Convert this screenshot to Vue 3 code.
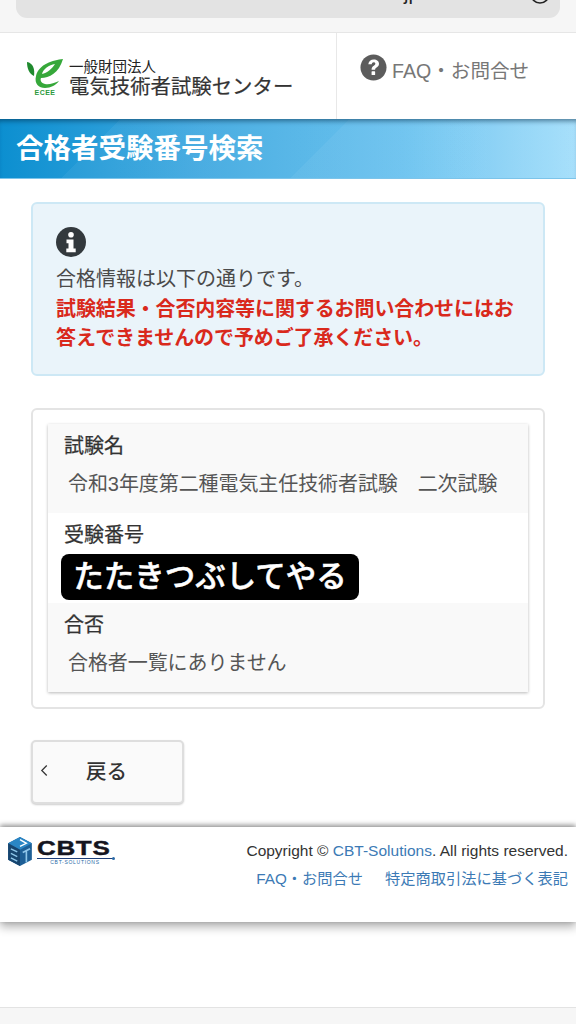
<script setup>
const rows = [
  { label: '試験名', value: '令和3年度第二種電気主任技術者試験\u3000二次試験', tone: 'grey' },
  { label: '受験番号', mask: 'たたきつぶしてやる', tone: 'white' },
  { label: '合否', value: '合格者一覧にありません', tone: 'grey' },
]
</script>

<template>
  <div class="page">
    <div class="chrome">
      <div class="urlbar">
        <span class="urltext">jp</span>
        <svg class="reload" viewBox="0 0 22 22" width="22" height="22" aria-hidden="true">
          <circle cx="11" cy="11" r="9" fill="none" stroke="#222" stroke-width="1.600"/>
        </svg>
      </div>
    </div>

    <header class="head">
      <div class="brand">
        <svg class="ecee" viewBox="0 0 40 44" width="40" height="44" aria-hidden="true">
          <path d="M2 6c6 1 8 7 7 14C4 18 2 12 2 6z" fill="#1f8a2e"/>
          <path fill-rule="evenodd" d="M38 3C28 4 14 8 11 20c-2 8 3 12 9 12s11-3 14-7c-5 2-10 4-14 3-4-1-5-4-4-6 8 0 18-5 22-19zM17 18c1-5 7-9 13-10-3 5-8 9-13 10z" fill="#36a83a"/>
          <text x="20" y="39" class="ecee-text">ECEE</text>
        </svg>
        <div class="org">
          <div class="org-sub">一般財団法人</div>
          <div class="org-main">電気技術者試験センター</div>
        </div>
      </div>
      <div class="faq">
        <svg class="q" viewBox="0 0 28 28" width="27" height="27" aria-hidden="true">
          <circle cx="14" cy="14" r="13.5" fill="#5c5c5c"/>
          <path d="M8.6 10.6C9 7.4 11.2 5.6 14.3 5.6c3.2 0 5.4 1.9 5.4 4.5 0 2-1 3-2.500 4-1.100.7-1.500 1.200-1.500 2.200h-3.700c0-2 .6-3.100 2.300-4.200 1-.7 1.600-1.200 1.600-2 0-.9-.7-1.500-1.700-1.500-1.100 0-1.800.7-2 2z" fill="#fff"/>
          <rect x="12" y="18" width="3.700" height="3.900" rx=".6" fill="#fff"/>
        </svg>
        <span>FAQ・お問合せ</span>
      </div>
    </header>

    <div class="band"><h1>合格者受験番号検索</h1></div>

    <main class="content">
      <section class="alert">
        <svg class="info" viewBox="0 0 30 30" width="30" height="30" aria-hidden="true">
          <circle cx="15" cy="15" r="15" fill="#33393d"/>
          <circle cx="15" cy="7.800" r="2.800" fill="#fff"/>
          <path d="M10.500 12.500h7v9h2.200v3.700h-9.400v-3.700h2.200v-5.300h-2z" fill="#fff"/>
        </svg>
        <p class="plain">合格情報は以下の通りです。</p>
        <p class="warn">試験結果・合否内容等に関するお問い合わせにはお答えできませんので予めご了承ください。</p>
      </section>

      <section class="card">
        <div class="table">
          <div v-for="row in rows" :key="row.label" class="row" :class="row.tone">
            <div class="label">{{ row.label }}</div>
            <div v-if="row.mask" class="mask">{{ row.mask }}</div>
            <div v-else class="value">{{ row.value }}</div>
          </div>
        </div>
      </section>

      <button class="back" type="button">
        <svg class="chev" viewBox="0 0 10 14" width="9" height="13" aria-hidden="true">
          <path d="M7.500 1.500 2 7l5.500 5.500" fill="none" stroke="#333" stroke-width="1.400"/>
        </svg>
        <span>戻る</span>
      </button>
    </main>

    <footer class="foot">
      <div class="cbts">
        <svg viewBox="0 0 28 34" width="26" height="31" aria-hidden="true">
          <path d="M14 1 27 8v18l-13 7-13-7V8z" fill="#1d5f96"/>
          <path d="M14 1 27 8 14 15 1 8z" fill="#2a86c5"/>
          <path d="M1 8l13 7v18L1 26z" fill="#17456f"/>
          <path d="M14 4l7 4-7 3.500" fill="none" stroke="#fff" stroke-width="1.500"/>
          <path d="M4 14l7 3.500M4 19l7 3.500M4 24l7 3.500" stroke="#8ec6ea" stroke-width="1.500"/>
          <path d="M17 18l8-4M21 16v13" stroke="#8ec6ea" stroke-width="1.800"/>
        </svg>
        <div class="cbts-word">
          <div class="cbts-name">CBTS</div>
          <div class="cbts-sub">CBT-SOLUTIONS</div>
        </div>
      </div>
      <div class="foot-text">
        <div class="copy">Copyright © <a>CBT-Solutions</a>. All rights reserved.</div>
        <div class="links"><a>FAQ・お問合せ</a><a>特定商取引法に基づく表記</a></div>
      </div>
    </footer>

    <div class="spacer"></div>
    <div class="toolbar"></div>
  </div>
</template>

<style>
html, body { margin: 0; background: #fff; }
</style>

<style scoped>
* { box-sizing: border-box; }
.page {
  width: 576px;
  height: 1024px;
  overflow: hidden;
  display: flex;
  flex-direction: column;
  font-family: "Liberation Sans", "Noto Sans CJK JP", sans-serif;
  color: #333;
  background: #fff;
}
.chrome {
  height: 33px;
  flex: none;
  background: #f6f6f6;
  border-bottom: 1px solid #e6e6e6;
}
.urlbar {
  margin: 0 16px;
  height: 18px;
  background: #e3e3e3;
  border-radius: 0 0 11px 11px;
  overflow: hidden;
  display: flex;
  align-items: flex-start;
}
.urltext {
  margin: -17px 0 0 388px;
  font-size: 20px;
  line-height: 20px;
  color: #222;
}
.reload { margin: -17px 0 0 109px; }
.head {
  height: 86px;
  flex: none;
  display: flex;
}
.brand {
  width: 337px;
  border-right: 1px solid #e8e8e8;
  padding: 23px 0 0 25px;
  display: flex;
  gap: 4px;
}
.ecee { flex: none; }
.ecee-text {
  font-size: 7px;
  font-weight: 700;
  fill: #2d9a3c;
  text-anchor: middle;
  letter-spacing: .5px;
}
.org-sub {
  font-size: 14.500px;
  line-height: 16px;
  margin-top: 3px;
  color: #222;
}
.org-main {
  font-size: 20.400px;
  line-height: 24px;
  color: #333;
  white-space: nowrap;
  -webkit-text-stroke: .2px #333;
}
.faq {
  display: flex;
  align-items: flex-start;
  gap: 5px;
  padding: 21px 0 0 23px;
  color: #777;
  font-size: 19.600px;
  line-height: 34px;
}
.faq span { white-space: nowrap; }
.band {
  height: 60px;
  flex: none;
  background:
    linear-gradient(135deg, transparent 0 55%, rgba(255,255,255,.05) 55% 100%),
    linear-gradient(135deg, transparent 0 19%, rgba(255,255,255,.05) 19% 100%),
    linear-gradient(90deg, #0c8fd0 0%, #41a9e0 35%, #62bfee 70%, #9edcfb 100%);
  box-shadow: inset 0 5px 5px -3px rgba(0,40,70,.55);
  border-bottom: 1px solid #7cc4ea;
  padding-left: 16px;
}
.band h1 {
  margin: 0;
  color: #fff;
  font-size: 27.500px;
  line-height: 59px;
  font-weight: 700;
  white-space: nowrap;
}
.content {
  flex: none;
  height: 648px;
  padding: 23px 31px 0;
  display: flex;
  flex-direction: column;
  align-items: flex-start;
}
.alert {
  width: 514px;
  height: 174px;
  background: #eaf4fa;
  border: 2px solid #cde8f5;
  border-radius: 6px;
  padding: 23px 23px 0;
}
.info { display: block; }
.plain, .warn {
  margin: 0;
  font-size: 20px;
  line-height: 29.500px;
}
.plain { color: #4a4a4a; margin-top: 8px; }
.warn { color: #d9291c; font-weight: 700; letter-spacing: -.1px; }
.card {
  width: 514px;
  height: 301px;
  margin-top: 32px;
  border: 2px solid #e4e4e4;
  border-radius: 6px;
  padding: 14px 15px;
}
.table {
  box-shadow: 0 1px 3px rgba(0,0,0,.28);
}
.row { height: 89.300px; }
.row.grey { background: #f9f9f9; }
.row.white { background: #fff; }
.label {
  padding: 9px 0 0 16px;
  font-size: 20px;
  line-height: 26px;
  color: #333;
  -webkit-text-stroke: .25px #333;
}
.value {
  padding: 11px 0 0 20px;
  font-size: 20px;
  line-height: 28px;
  color: #555;
  white-space: nowrap;
  letter-spacing: -.08px;
}
.mask {
  margin: 6px 0 0 13px;
  width: 298px;
  height: 46px;
  background: #000;
  color: #fff;
  border-radius: 8px;
  font-size: 30.500px;
  line-height: 45px;
  font-weight: 500;
  text-align: center;
  white-space: nowrap;
  -webkit-text-stroke: .5px #fff;
}
.back {
  margin-top: 31px;
  width: 153px;
  height: 64px;
  background: #fafafa;
  border: 2px solid #dedede;
  border-radius: 5px;
  box-shadow: 0 1px 2px rgba(0,0,0,.2);
  padding: 0 0 0 7px;
  display: flex;
  align-items: center;
  font-family: inherit;
  color: #333;
}
.chev { margin-top: -3px; }
.back span {
  margin: -4px 0 0 37px;
  font-size: 20.500px;
  font-weight: 500;
}
.foot {
  flex: none;
  height: 95px;
  display: flex;
  justify-content: space-between;
  padding: 9px 8px 0 7px;
  background: #fff;
  box-shadow: 0 -2px 5px rgba(0,0,0,.4), 0 5px 9px rgba(0,0,0,.3);
  position: relative;
}
.cbts { display: flex; align-items: flex-start; gap: 4px; }
.cbts-word { width: 76px; margin-top: 4px; }
.cbts-name {
  font-size: 20px;
  line-height: 17px;
  font-weight: 700;
  letter-spacing: .5px;
  color: #15151f;
  transform: scaleX(1.300);
  transform-origin: left center;
  -webkit-text-stroke: .4px #15151f;
}
.cbts-sub {
  position: relative;
  font-size: 5px;
  line-height: 7px;
  letter-spacing: .7px;
  color: #2a6aa8;
  text-align: center;
  border-top: 1.500px solid #1d3d78;
  margin-top: 1px;
}
.cbts-sub::after {
  content: "";
  position: absolute;
  right: -2px;
  top: -2.500px;
  width: 3px;
  height: 3px;
  border-radius: 50%;
  background: #2a6aa8;
}
.foot-text { text-align: right; font-size: 15.500px; }
.copy { line-height: 30px; color: #333; white-space: nowrap; }
.links {
  font-size: 15.250px;
  line-height: 25px;
  display: flex;
  justify-content: flex-end;
  gap: 22px;
  color: #3c7ab5;
}
.copy a { color: #3c7ab5; }
.spacer { flex: 1; }
.toolbar {
  height: 17px;
  flex: none;
  background: #f6f6f6;
  border-top: 1px solid #e3e3e3;
}
</style>
